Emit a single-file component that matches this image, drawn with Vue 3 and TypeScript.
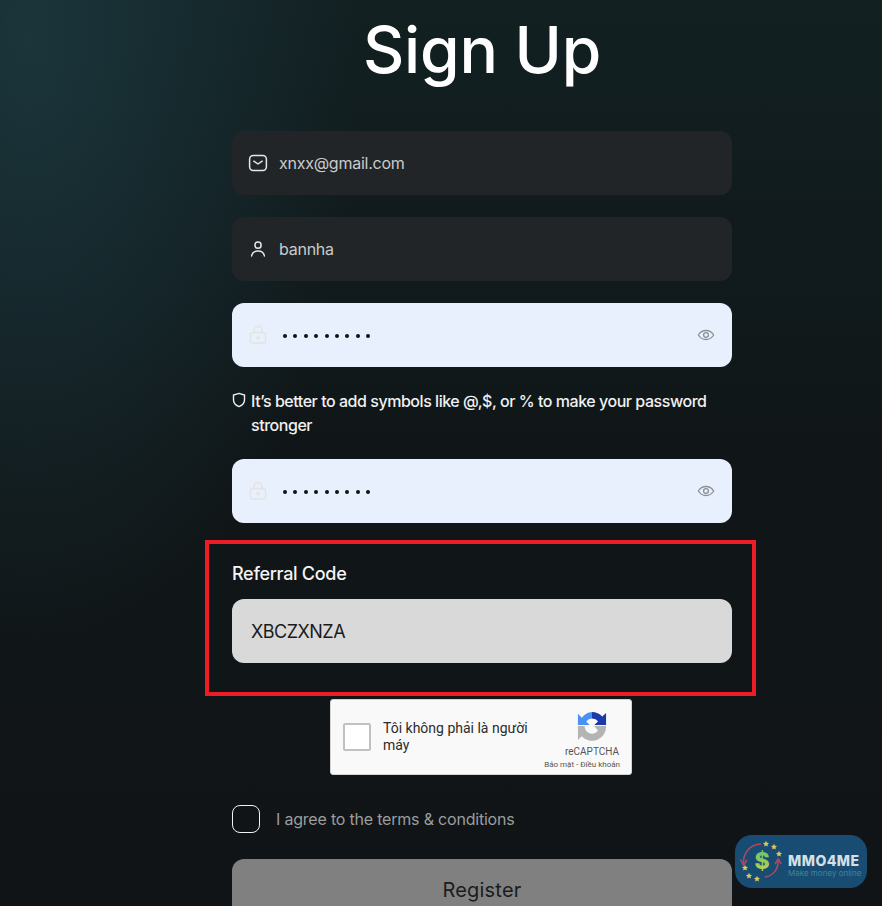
<template>
  <main class="page">
    <section class="signup">
      <h1 class="signup__title">Sign Up</h1>

      <form class="signup__form" @submit.prevent>
        <label class="field field--dark">
          <svg class="field__icon" viewBox="0 0 20 20" aria-hidden="true">
            <rect x="1.600" y="2.600" width="16.800" height="14.800" rx="3.600" />
            <path d="M5.800 8.200 10 11l4.200-2.800" />
          </svg>
          <span class="field__value">{{ email }}</span>
        </label>

        <label class="field field--dark">
          <svg class="field__icon" viewBox="0 0 20 20" aria-hidden="true">
            <circle cx="10" cy="6.200" r="3.100" />
            <path d="M3.600 17c.5-3.400 3-5 6.400-5s5.900 1.600 6.400 5" />
          </svg>
          <span class="field__value">{{ username }}</span>
        </label>

        <label class="field field--filled">
          <svg class="field__icon field__icon--lock" viewBox="0 0 20 20" aria-hidden="true">
            <rect x="2.500" y="7.500" width="15" height="10.500" rx="2.500" />
            <path d="M6 7.500V5.500a4 4 0 0 1 8 0v2" />
            <circle cx="10" cy="12.700" r="1" />
          </svg>
          <span class="field__dots">
            <i v-for="n in dotCount" :key="n" />
          </span>
          <svg class="field__eye" viewBox="0 0 20 20" aria-hidden="true">
            <path d="M1.500 10C3.500 6.600 6.500 5 10 5s6.500 1.600 8.500 5c-2 3.400-5 5-8.500 5s-6.500-1.600-8.500-5Z" />
            <circle cx="10" cy="10" r="2.700" />
          </svg>
        </label>

        <p class="hint">
          <svg class="hint__icon" viewBox="0 0 14 16" aria-hidden="true">
            <path d="M7 1.400 12.500 3v5c0 3.200-2.200 5.300-5.500 6.600C3.700 13.300 1.500 11.200 1.500 8V3L7 1.400Z" />
          </svg>
          <span>It’s better to add symbols like @,$, or % to make your password stronger</span>
        </p>

        <label class="field field--filled">
          <svg class="field__icon field__icon--lock" viewBox="0 0 20 20" aria-hidden="true">
            <rect x="2.500" y="7.500" width="15" height="10.500" rx="2.500" />
            <path d="M6 7.500V5.500a4 4 0 0 1 8 0v2" />
            <circle cx="10" cy="12.700" r="1" />
          </svg>
          <span class="field__dots">
            <i v-for="n in dotCount" :key="n" />
          </span>
          <svg class="field__eye" viewBox="0 0 20 20" aria-hidden="true">
            <path d="M1.500 10C3.500 6.600 6.500 5 10 5s6.500 1.600 8.500 5c-2 3.400-5 5-8.500 5s-6.500-1.600-8.500-5Z" />
            <circle cx="10" cy="10" r="2.700" />
          </svg>
        </label>

        <div class="referral">
          <div class="referral__label">Referral Code</div>
          <div class="referral__input">{{ referralCode }}</div>
        </div>

        <div class="captcha">
          <span class="captcha__box" />
          <span class="captcha__text">Tôi không phải là người máy</span>
          <div class="captcha__brand">
            <svg class="captcha__logo" viewBox="0 0 32 32" aria-hidden="true">
              <path fill="#4a90f5" d="M16 1v7a8 8 0 0 0-6.300 3.100L13.500 15H1V3l4.100 4.100A15 15 0 0 1 16 1Z" />
              <path fill="#1c3aa9" d="M16 1a15 15 0 0 1 10.900 4.900L31 2v13H18.500l4-4A8 8 0 0 0 16 8Z" />
              <path fill="#b4b4b4" d="M1 16h7.100a8 8 0 0 0 14.300 5L18.500 16H31a15 15 0 0 1-26 10.900L1 31Z" />
            </svg>
            <div class="captcha__name">reCAPTCHA</div>
            <div class="captcha__links">Bảo mật - Điều khoản</div>
          </div>
        </div>

        <label class="terms">
          <span class="terms__box" />
          <span class="terms__text">I agree to the terms &amp; conditions</span>
        </label>

        <button class="register" type="submit"><span>Register</span></button>
      </form>
    </section>

    <div class="badge">
      <svg class="badge__mark" viewBox="0 0 49 53" aria-hidden="true">
        <defs>
          <linearGradient id="dollar-fill" x1="0" y1="0" x2="0" y2="1">
            <stop offset="0" stop-color="#5fbf78" />
            <stop offset="1" stop-color="#c4d444" />
          </linearGradient>
        </defs>
        <path class="badge__arc" d="M26 9C15 9.500 8 18 8.500 28" />
        <path class="badge__arc" d="M30 42c8-1 13.500-8 13-16" />
        <path class="badge__tip" d="m5.500 24.500 3 5.500 3.500-5" />
        <path class="badge__tip" d="m40 29 3.200-5 3 5" />
        <polygon
          v-for="(star, i) in stars"
          :key="i"
          class="badge__star"
          :points="starPoints(star[0], star[1])"
        />
        <text class="badge__dollar" x="27" y="33.500" text-anchor="middle" fill="url(#dollar-fill)">$</text>
      </svg>
      <div class="badge__copy">
        <div class="badge__name">MMO4ME</div>
        <div class="badge__tag">Make money online</div>
      </div>
    </div>
  </main>
</template>

<script setup lang="ts">
const email = "xnxx@gmail.com";
const username = "bannha";
const referralCode = "XBCZXNZA";
const dotCount = 9;

const stars: [number, number][] = [
  [31, 9],
  [39, 12],
  [44, 19],
  [10, 33],
  [14, 41],
  [22, 44],
];

function starPoints(cx: number, cy: number): string {
  const pts: string[] = [];
  for (let i = 0; i < 10; i++) {
    const r = i % 2 ? 1.500 : 3.200;
    const a = (Math.PI / 5) * i - Math.PI / 2;
    pts.push(`${(cx + r * Math.cos(a)).toFixed(2)},${(cy + r * Math.sin(a)).toFixed(2)}`);
  }
  return pts.join(" ");
}
</script>

<style scoped>
.page {
  position: relative;
  height: 906px;
  overflow: hidden;
  background:
    radial-gradient(ellipse 330px 620px at 30px 40px, rgba(30, 62, 70, 0.7), rgba(30, 62, 70, 0) 100%),
    linear-gradient(180deg, #122022 0%, #101618 50%, #101416 100%);
  font-family: Inter, "Noto Sans", sans-serif;
  color: #fff;
}

.signup {
  width: 500px;
  margin-left: 232px;
}

.signup__title {
  margin: 0;
  height: 131px;
  padding-top: 10px;
  box-sizing: border-box;
  font-size: 64px;
  line-height: 80px;
  font-weight: 500;
  letter-spacing: -0.2px;
  text-align: center;
}

.signup__form {
  display: flex;
  flex-direction: column;
}

.field {
  height: 64px;
  display: flex;
  align-items: center;
  padding: 0 17px 0 16px;
  border-radius: 12px;
  margin-bottom: 22px;
}

.field--dark {
  background: #212528;
  color: #c9cbcc;
}

.field--filled {
  background: #e8f0fe;
  margin-bottom: 0;
}

.field__icon {
  width: 20px;
  height: 20px;
  margin-right: 11px;
  fill: none;
  stroke: #e6e7e8;
  stroke-width: 1.500;
  stroke-linecap: round;
  stroke-linejoin: round;
  flex: none;
}

.field__icon--lock {
  stroke: #e2e3e2;
}

.field__value {
  font-size: 16px;
  letter-spacing: -0.25px;
}

.field__dots {
  display: flex;
  gap: 6.400px;
  margin: 1px 0 0 4px;
}

.field__dots i {
  width: 4px;
  height: 4px;
  border-radius: 50%;
  background: #111;
}

.field__eye {
  width: 18px;
  height: 18px;
  margin-left: auto;
  fill: none;
  stroke: #8b8f94;
  stroke-width: 1.400;
}

.hint {
  display: flex;
  gap: 5px;
  margin: 22px 0;
  font-size: 16px;
  line-height: 24px;
  letter-spacing: -0.46px;
  font-weight: 500;
  color: #f0f1f1;
}

.hint__icon {
  width: 14px;
  height: 16px;
  margin-top: 3px;
  flex: none;
  fill: none;
  stroke: #f0f1f1;
  stroke-width: 1.400;
}

.referral {
  margin: 17px -24px 3px -27px;
  padding: 18px 20px 0 23px;
  border: 4px solid #ee1c25;
  height: 156px;
  box-sizing: border-box;
}

.referral__label {
  font-size: 18px;
  line-height: 24px;
  font-weight: 500;
  letter-spacing: -0.3px;
  margin-bottom: 13px;
  color: #f4f4f4;
}

.referral__input {
  height: 64px;
  line-height: 65px;
  padding: 0 19px;
  border-radius: 12px;
  background: #d9d9d9;
  color: #1b1b1b;
  font-size: 18px;
  letter-spacing: -0.5px;
}

.captcha {
  align-self: flex-start;
  margin-left: 98px;
  width: 302px;
  height: 76px;
  box-sizing: border-box;
  display: flex;
  align-items: center;
  padding: 0 12px;
  background: #f9f9f9;
  border: 1px solid #d3d3d3;
  border-radius: 3px;
  font-family: Roboto, sans-serif;
  color: #2b2b2b;
}

.captcha__box {
  width: 28px;
  height: 28px;
  box-sizing: border-box;
  flex: none;
  background: #fff;
  border: 2px solid #c1c1c1;
  border-radius: 2px;
}

.captcha__text {
  width: 160px;
  margin-left: 12px;
  font-size: 14px;
  line-height: 17px;
}

.captcha__brand {
  margin: 7px 0 0 auto;
  display: flex;
  flex-direction: column;
  align-items: flex-end;
  color: #555;
}

.captcha__logo {
  width: 30px;
  height: 32px;
  margin: 0 12px 4px 0;
}

.captcha__name {
  font-size: 10px;
  line-height: 12px;
}

.captcha__links {
  font-size: 8px;
  line-height: 12px;
  margin: 1px -1px 0 0;
  white-space: nowrap;
}

.terms {
  display: flex;
  align-items: center;
  gap: 16px;
  margin: 30px 0 26px;
}

.terms__box {
  width: 28px;
  height: 28px;
  box-sizing: border-box;
  border: 1px solid #f2f2f2;
  border-radius: 8px;
}

.terms__text {
  font-size: 16px;
  letter-spacing: -0.2px;
  color: #9b9d9e;
}

.register {
  height: 64px;
  border: 0;
  padding: 0 0 2px;
  border-radius: 12px;
  background: #808080;
  color: #1a1c1d;
  font-family: inherit;
  font-size: 20px;
  letter-spacing: 0.2px;
}

.badge {
  position: absolute;
  left: 735px;
  top: 835px;
  width: 132px;
  height: 53px;
  box-sizing: border-box;
  display: flex;
  align-items: center;
  gap: 4px;
  border-radius: 17px;
  background: #194c73;
}

.badge__mark {
  width: 49px;
  height: 53px;
  flex: none;
}

.badge__arc,
.badge__tip {
  fill: none;
  stroke: #b04a62;
  stroke-width: 1.500;
}

.badge__star {
  fill: #dccb5c;
}

.badge__dollar {
  font-family: Inter, sans-serif;
  font-size: 23px;
  font-weight: 800;
}

.badge__copy {
  margin-top: 7px;
}

.badge__name {
  font-size: 14px;
  line-height: 15px;
  font-weight: 800;
  letter-spacing: 0.5px;
  color: #d5e0e6;
}

.badge__tag {
  font-size: 8px;
  line-height: 10px;
  color: #3a8796;
  white-space: nowrap;
}
</style>
